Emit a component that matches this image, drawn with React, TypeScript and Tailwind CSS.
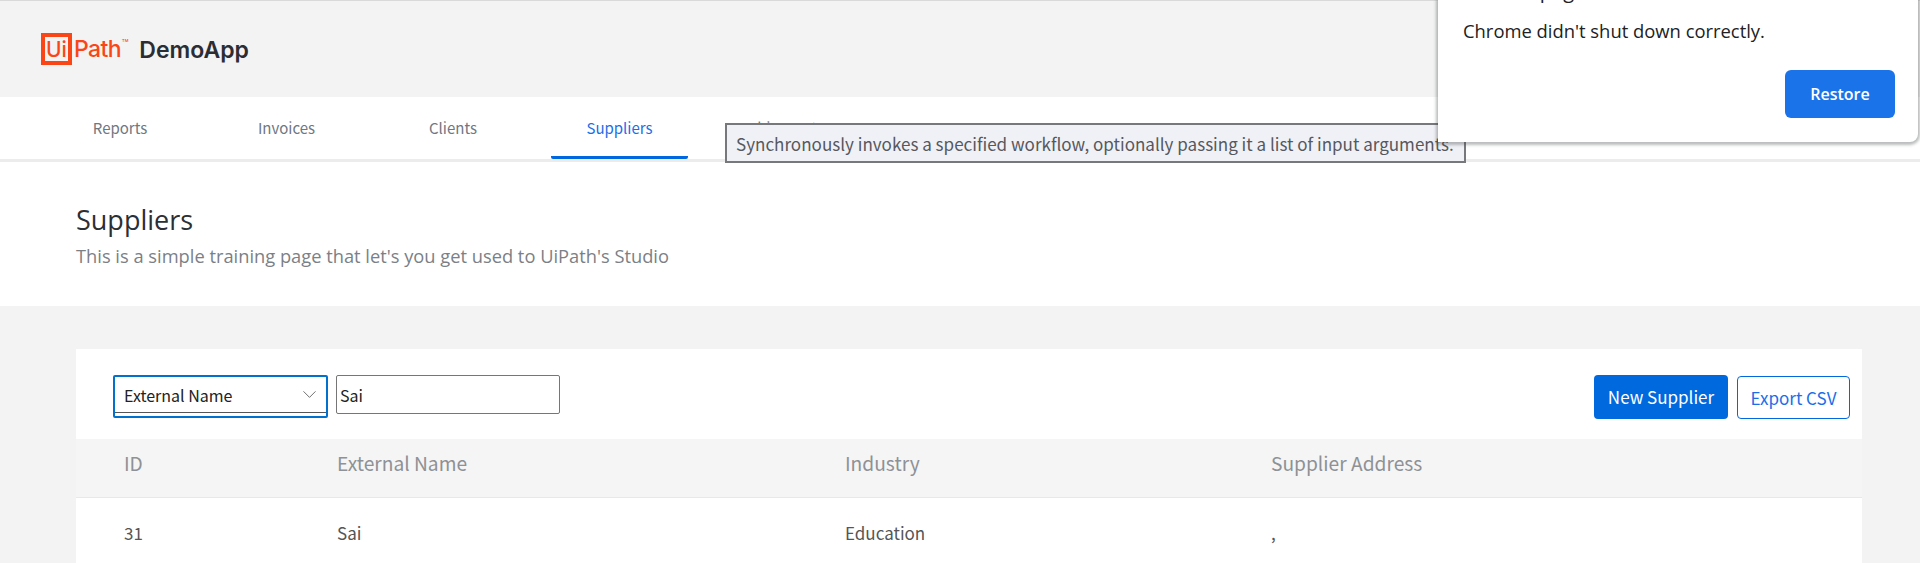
import { ChevronDown } from "lucide-react";

const sourceFont = "font-['Noto_Sans_CJK_SC','Noto_Sans',sans-serif]";
const chromeFont = "font-['Open_Sans','Noto_Sans',sans-serif]";

const tabs = ["Reports", "Invoices", "Clients", "Suppliers", "Shipments"];

function Logo() {
  return (
    <div className="flex items-center font-['Inter',sans-serif] font-medium text-[#fa4616]">
      <div className="flex h-[32px] w-[31px] items-center justify-center border-[4px] border-[#fa4616] text-[21px] leading-none">
        Ui
      </div>
      <span className="ml-[2px] text-[23px] leading-none tracking-[-0.6px]">Path</span>
      <span className="mb-[16px] ml-[1px] text-[4px] leading-none">TM</span>
    </div>
  );
}

function Nav() {
  return (
    <nav className="relative z-10 flex h-[62px] gap-[29.5px] bg-white pl-[51.5px] shadow-[0_3px_0_#ececec]">
      {tabs.map((tab) => (
        <div
          key={tab}
          className={`flex w-[137px] justify-center pt-[21px] text-[15px] leading-[20px] ${
            tab === "Suppliers"
              ? "h-[62px] rounded-b-[2px] border-b-[3px] border-[#0067df] text-[#1a6fe8]"
              : "text-[#6f7782]"
          }`}
        >
          {tab}
        </div>
      ))}
    </nav>
  );
}

function Toolbar() {
  return (
    <div className="flex h-[90px] items-start justify-between pt-[26px] pl-[37px] pr-[12px]">
      <div className="flex gap-[8px]">
        <div className="flex h-[43px] w-[215px] flex-col rounded-[2px] border-2 border-[#0072ce]">
          <div className="flex h-[36px] items-center justify-between border-b border-[#555] pl-[9px] pr-[5px] text-[16px] text-[#222]">
            External Name
            <ChevronDown size={23} strokeWidth={0.8} className="text-[#444]" />
          </div>
        </div>
        <div className="flex h-[39px] w-[224px] items-center rounded-[2px] border border-[#767676] pl-[3px] text-[16px] text-[#222]">
          Sai
        </div>
      </div>
      <div className="flex items-end gap-[9px] text-[17px]">
        <button className="h-[44px] w-[134px] rounded-[4px] bg-[#0069de] text-white">New Supplier</button>
        <button className="h-[43px] w-[113px] rounded-[4px] border border-[#0069de] text-[#1a6fe8]">Export CSV</button>
      </div>
    </div>
  );
}

function Table() {
  return (
    <div>
      <div className="grid h-[59px] grid-cols-[213px_508px_426px_1fr] items-center border-b border-[#e8e8e8] bg-[#f5f5f5] pb-[10px] pl-[48px] text-[19.2px] text-[#8e9196]">
        <div>ID</div>
        <div>External Name</div>
        <div>Industry</div>
        <div>Supplier Address</div>
      </div>
      <div className="grid h-[66px] grid-cols-[213px_508px_426px_1fr] items-center bg-white pt-[4px] pl-[48px] text-[17px] text-[#555]">
        <div>31</div>
        <div>Sai</div>
        <div>Education</div>
        <div>,</div>
      </div>
    </div>
  );
}

export default function App() {
  return (
    <div className={`relative h-[563px] w-[1920px] overflow-hidden bg-[#f3f3f3] ${sourceFont}`}>
      {/* Header */}
      <header className="flex h-[97px] items-center gap-[11px] border-t border-[#d9d9d9] pl-[41px]">
        <Logo />
        <span className="pt-[2px] font-['Inter',sans-serif] text-[23px] font-semibold text-[#2b2d33]">DemoApp</span>
      </header>

      <Nav />

      {/* Page title */}
      <section className={`h-[147px] bg-white pl-[76px] pt-[44px] ${chromeFont}`}>
        <h1 className="text-[27px] leading-[34px] text-[#2b2f36]">Suppliers</h1>
        <p className="mt-[7px] text-[18.3px] leading-[24px] text-[#7b7f86]">
          This is a simple training page that let's you get used to UiPath's Studio
        </p>
      </section>

      {/* Suppliers card */}
      <main className="ml-[76px] mt-[43px] w-[1786px] bg-white">
        <Toolbar />
        <Table />
      </main>

      {/* Studio tooltip */}
      <div className="absolute left-[725px] top-[123px] z-20 flex h-[40px] w-[741px] items-center border-2 border-[#77787c] bg-[#f0f1f7] pl-[9px] pt-[2px] text-[17.05px] text-[#56585e]">
        Synchronously invokes a specified workflow, optionally passing it a list of input arguments.
      </div>

      {/* Chrome restore bubble */}
      <div
        className={`absolute right-[2px] top-0 z-30 h-[142px] w-[480px] rounded-br-[8px] bg-white shadow-[0_1px_3px_2px_rgba(60,64,67,0.35)] ${chromeFont}`}
      >
        <div className="absolute left-[25px] top-[-23px] text-[20px] leading-[28px] text-[#202124]">Restore pages?</div>
        <div className="absolute left-[25px] top-[18px] text-[18.4px] leading-[26px] text-[#202124]">
          Chrome didn't shut down correctly.
        </div>
        <button className="absolute right-[23px] top-[70px] h-[48px] w-[110px] rounded-[6px] bg-[#1a73e8] text-[16px] font-semibold text-white">
          Restore
        </button>
      </div>
    </div>
  );
}
